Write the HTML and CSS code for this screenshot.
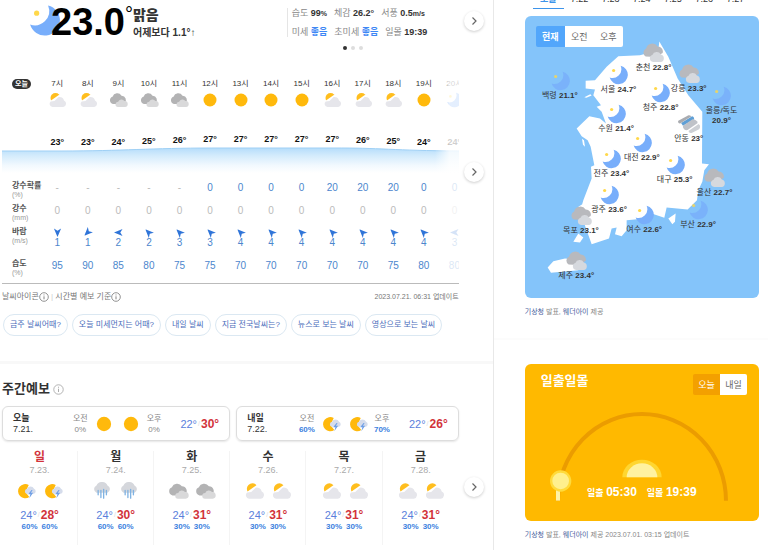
FILE: index.html
```html
<!DOCTYPE html>
<html lang="ko">
<head>
  <meta charset="UTF-8" />
  <meta name="viewport" content="width=device-width, initial-scale=1.0" />
  <title>날씨</title>
  <link rel="stylesheet" href="styles.css">
</head>
<body>
  <svg class="sprite" aria-hidden="true">
    <symbol id="sun" viewBox="0 0 20 16"><circle cx="10" cy="8" r="6.500" fill="#ffb90c"/></symbol>
    <symbol id="partly" viewBox="0 0 20 16">
      <circle cx="8.500" cy="6" r="5" fill="#ffbe1e"/>
      <path d="M2.500 9.500L12.500 2.500L20 8V16H2z" fill="#fff"/>
      <path d="M5.500 15a3.200 3.200 0 0 1-1.800-5.600L7.500 9l4-4a4.600 4.600 0 0 1 5.500 3.500a3.400 3.400 0 0 1-.8 6.500z" fill="#e6e6eb"/>
    </symbol>
    <symbol id="cloudy" viewBox="0 0 20 16">
      <path d="M5 12a3.800 3.800 0 0 1-.5-7.300a5 5 0 0 1 9-1a4.300 4.300 0 0 1 3 7.500L12 12z" fill="#b3b3b4"/>
      <path d="M10 15a2.600 2.600 0 0 1 .2-5.200a3.500 3.500 0 0 1 6.200-.8a3 3 0 0 1 .6 6z" fill="#d9d9da"/>
    </symbol>
    <symbol id="shower" viewBox="0 0 20 16">
      <path d="M12.500 2.500A6.500 6.500 0 1 0 13 13.500L9.500 9z" fill="#ffb90c"/>
      <path d="M10.500 10.500a2.400 2.400 0 0 1 .5-4.600a3.500 3.500 0 0 1 6.300 0a2.500 2.500 0 0 1 0 4.600z" fill="#d5dceb"/>
      <path d="M15 7l-3 4h2l-1 3.500 3.500-5h-2l1.500-2.500z" fill="#6f9fe6"/>
    </symbol>
    <symbol id="rain" viewBox="0 0 20 16">
      <path d="M5 9.500a3.500 3.500 0 0 1 0-6.500a5.500 5.500 0 0 1 10 0a3.500 3.500 0 0 1 0 6.500z" fill="#d5d7dc"/>
      <path d="M6.500 7.500v4M9 7.500v6.500M11.500 6.500v8M14 7.500v4" stroke="#7fb2e2" stroke-width="1.200" stroke-linecap="round"/>
    </symbol>
    <symbol id="moon" viewBox="0 0 22 20">
      <path d="M13.500 .8A9.300 9.300 0 1 1 2.500 12.500A9 9 0 0 0 11.500 10.500A9 9 0 0 0 13.500 .8z" fill="#78aefb"/>
      <circle cx="6.500" cy="5.500" r="1.600" fill="#ffd84a"/>
    </symbol>
    <symbol id="cloud-big" viewBox="0 0 22 20">
      <path d="M3.500 13.500a4.500 4.500 0 0 1 .5-8a6.300 6.300 0 0 1 11.500-2a5 5 0 0 1 5 6.500l-7 4z" fill="#b8b9bd"/>
      <path d="M11 19a3.600 3.600 0 0 1-.8-7a4.700 4.700 0 0 1 8.500-.5a3.900 3.900 0 0 1 .3 7.500z" fill="#d6d9de"/>
    </symbol>
    <symbol id="haze" viewBox="0 0 26 20">
      <path d="M5 9L17 1.500a3 3 0 0 1 2 3.500L7 12z" fill="#5e9fd6"/>
      <path d="M2 6.500L13 .5a3 3 0 0 1 3 1.500L4 9.500a2 2 0 0 1-2-3z" fill="#a9abb0"/>
      <path d="M7 12l10-7a6 6 0 0 1 6 4l-11 7.500a4 4 0 0 1-5-4.500z" fill="#bfc2c8"/>
      <path d="M13 17.500L24 10a3.500 3.500 0 0 1 0 6L17 19.500a3 3 0 0 1-4-2z" fill="#cdd0d5"/>
    </symbol>
    <symbol id="wind" viewBox="0 0 10 10"><path d="M5 10L1 0.500L5 3L9 0.500z" fill="#2f74d8"/></symbol>
    <symbol id="info" viewBox="0 0 10 10">
      <circle cx="5" cy="5" r="4.300" fill="none" stroke="currentColor" stroke-width=".8"/>
      <path d="M5 4.300v3M5 2.500v.9" stroke="currentColor" stroke-width=".9"/>
    </symbol>
    <symbol id="next" viewBox="0 0 10 10"><path d="M3.500 1.500L7 5L3.500 8.500" fill="none" stroke="#666" stroke-width="1.200"/></symbol>
  </svg>

  <main>
    <section class="now">
      <svg class="now-icon"><use href="#moon"/></svg>
      <strong class="now-temp">23.0<sup>°</sup></strong>
      <div class="now-text">
        <strong>맑음</strong>
        <span>어제보다 1.1°↑</span>
      </div>
      <div class="now-detail">
        <p><span>습도 <b>99<small>%</small></b></span><span>체감 <b>26.2°</b></span><span>서풍 <b>0.5<small>m/s</small></b></span></p>
        <p><span>미세 <b class="good">좋음</b></span><span>초미세 <b class="good">좋음</b></span><span>일몰 <b>19:39</b></span></p>
        <div class="dots"><i class="on"></i><i></i><i></i></div>
      </div>
      <button class="next" aria-label="다음"><svg><use href="#next"/></svg></button>
    </section>

    <section class="hourly">
      <div class="hourly-scroll">
        <table>
          <tr class="time">
            <th><span class="pill">오늘</span></th>
            <td>7시</td><td>8시</td><td>9시</td><td>10시</td><td>11시</td><td>12시</td><td>13시</td><td>14시</td><td>15시</td><td>16시</td><td>17시</td><td>18시</td><td>19시</td><td>20시</td>
          </tr>
          <tr class="sky">
            <th></th>
            <td><svg><use href="#partly"/></svg></td>
            <td><svg><use href="#partly"/></svg></td>
            <td><svg><use href="#cloudy"/></svg></td>
            <td><svg><use href="#cloudy"/></svg></td>
            <td><svg><use href="#cloudy"/></svg></td>
            <td><svg><use href="#sun"/></svg></td>
            <td><svg><use href="#sun"/></svg></td>
            <td><svg><use href="#sun"/></svg></td>
            <td><svg><use href="#sun"/></svg></td>
            <td><svg><use href="#partly"/></svg></td>
            <td><svg><use href="#partly"/></svg></td>
            <td><svg><use href="#partly"/></svg></td>
            <td><svg><use href="#sun"/></svg></td>
            <td><svg><use href="#moon"/></svg></td>
          </tr>
          <tr class="temp">
            <th></th>
            <td>23°</td><td>23°</td><td>24°</td><td class="t25">25°</td><td class="t26">26°</td><td class="t27">27°</td><td class="t27">27°</td><td class="t27">27°</td><td class="t27">27°</td><td class="t27">27°</td><td class="t26">26°</td><td class="t25">25°</td><td>24°</td><td>24°</td>
          </tr>
          <tr class="curve">
            <td colspan="15">
              <svg viewBox="0 0 468 30" preserveAspectRatio="none">
                <defs>
                  <linearGradient id="fade" x1="0" y1="0" x2="0" y2="1">
                    <stop offset="0" stop-color="#b5ddfb"/>
                    <stop offset=".3" stop-color="#d3ebfc"/>
                    <stop offset=".7" stop-color="#f2f9fe"/>
                    <stop offset="1" stop-color="#fff"/>
                  </linearGradient>
                </defs>
                <path d="M0 4H60C120 4 150 1 210 1H340C380 1 400 4 468 4V26H0z" fill="url(#fade)"/>
                <path d="M0 4H60C120 4 150 1 210 1H340C380 1 400 4 468 4" fill="none" stroke="#9fd0f5"/>
              </svg>
            </td>
          </tr>
          <tr class="blue">
            <th>강수확률<small>(%)</small></th>
            <td class="none">-</td><td class="none">-</td><td class="none">-</td><td class="none">-</td><td class="none">-</td><td>0</td><td>0</td><td>0</td><td>0</td><td>20</td><td>20</td><td>20</td><td>0</td><td>0</td>
          </tr>
          <tr class="gray">
            <th>강수<small>(mm)</small></th>
            <td>0</td><td>0</td><td>0</td><td>0</td><td>0</td><td>0</td><td>0</td><td>0</td><td>0</td><td>0</td><td>0</td><td>0</td><td>0</td><td>0</td>
          </tr>
          <tr class="blue wind">
            <th>바람<small>(m/s)</small></th>
            <td><svg><use href="#wind"/></svg>1</td>
            <td><svg class="sw"><use href="#wind"/></svg>1</td>
            <td><svg class="w"><use href="#wind"/></svg>2</td>
            <td><svg class="nw"><use href="#wind"/></svg>2</td>
            <td><svg class="nw"><use href="#wind"/></svg>3</td>
            <td><svg class="nw"><use href="#wind"/></svg>3</td>
            <td><svg class="nw"><use href="#wind"/></svg>4</td>
            <td><svg class="nw"><use href="#wind"/></svg>4</td>
            <td><svg class="nw"><use href="#wind"/></svg>4</td>
            <td><svg class="nw"><use href="#wind"/></svg>4</td>
            <td><svg class="nw"><use href="#wind"/></svg>4</td>
            <td><svg class="nw"><use href="#wind"/></svg>4</td>
            <td><svg class="nw"><use href="#wind"/></svg>4</td>
            <td><svg class="w"><use href="#wind"/></svg>3</td>
          </tr>
          <tr class="blue">
            <th>습도<small>(%)</small></th>
            <td>95</td><td>90</td><td>85</td><td>80</td><td>75</td><td>75</td><td>70</td><td>70</td><td>70</td><td>70</td><td>70</td><td>75</td><td>80</td><td>80</td>
          </tr>
        </table>
      </div>
      <button class="next" aria-label="다음 시간"><svg><use href="#next"/></svg></button>
    </section>

    <div class="notes">
      <span>날씨아이콘<svg><use href="#info"/></svg> <i>|</i> 시간별 예보 기준<svg><use href="#info"/></svg></span>
      <time>2023.07.21. 06:31 업데이트</time>
    </div>

    <nav class="chips">
      <a href="#">금주 날씨어때?</a>
      <a href="#">오늘 미세먼지는 어때?</a>
      <a href="#">내일 날씨</a>
      <a href="#">지금 전국날씨는?</a>
      <a href="#">뉴스로 보는 날씨</a>
      <a href="#">영상으로 보는 날씨</a>
    </nav>

    <section class="weekly">
      <h2>주간예보 <svg><use href="#info"/></svg></h2>
      <div class="cards">
        <div class="card">
          <div class="day"><strong>오늘</strong><span>7.21.</span></div>
          <div class="half">오전<span>0%</span></div>
          <svg><use href="#sun"/></svg>
          <svg><use href="#sun"/></svg>
          <div class="half">오후<span>0%</span></div>
          <div class="range"><span>22°</span><i>/</i><b>30°</b></div>
        </div>
        <div class="card">
          <div class="day"><strong>내일</strong><span>7.22.</span></div>
          <div class="half">오전<b>60%</b></div>
          <svg><use href="#shower"/></svg>
          <svg><use href="#shower"/></svg>
          <div class="half">오후<b>70%</b></div>
          <div class="range"><span>22°</span><i>/</i><b>26°</b></div>
        </div>
      </div>
      <ul class="week">
        <li>
          <strong class="sunday">일</strong><span class="date">7.23.</span>
          <div class="icons"><svg><use href="#shower"/></svg><svg><use href="#shower"/></svg></div>
          <div class="range"><span>24°</span><i>/</i><b>28°</b></div>
          <div class="chance"><span>60%</span><span>60%</span></div>
        </li>
        <li>
          <strong>월</strong><span class="date">7.24.</span>
          <div class="icons"><svg><use href="#rain"/></svg><svg><use href="#rain"/></svg></div>
          <div class="range"><span>24°</span><i>/</i><b>30°</b></div>
          <div class="chance"><span>60%</span><span>60%</span></div>
        </li>
        <li>
          <strong>화</strong><span class="date">7.25.</span>
          <div class="icons"><svg><use href="#cloudy"/></svg><svg><use href="#cloudy"/></svg></div>
          <div class="range"><span>24°</span><i>/</i><b>31°</b></div>
          <div class="chance"><span>30%</span><span>30%</span></div>
        </li>
        <li>
          <strong>수</strong><span class="date">7.26.</span>
          <div class="icons"><svg><use href="#partly"/></svg><svg><use href="#partly"/></svg></div>
          <div class="range"><span>24°</span><i>/</i><b>31°</b></div>
          <div class="chance"><span>30%</span><span>30%</span></div>
        </li>
        <li>
          <strong>목</strong><span class="date">7.27.</span>
          <div class="icons"><svg><use href="#partly"/></svg><svg><use href="#partly"/></svg></div>
          <div class="range"><span>24°</span><i>/</i><b>31°</b></div>
          <div class="chance"><span>30%</span><span>30%</span></div>
        </li>
        <li>
          <strong>금</strong><span class="date">7.28.</span>
          <div class="icons"><svg><use href="#partly"/></svg><svg><use href="#partly"/></svg></div>
          <div class="range"><span>24°</span><i>/</i><b>31°</b></div>
          <div class="chance"><span>30%</span><span>30%</span></div>
        </li>
      </ul>
      <button class="next" aria-label="다음 날"><svg><use href="#next"/></svg></button>
    </section>
  </main>

  <aside>
    <section class="nation">
      <nav class="dates">
        <a href="#" class="on">오늘</a><a href="#">7.22</a><a href="#">7.23</a><a href="#">7.24</a><a href="#">7.25</a><a href="#">7.26</a><a href="#">7.27</a>
      </nav>
      <div class="map">
        <svg class="land" viewBox="40 48 703 846" fill="#fff" aria-hidden="true">
          <path d="M443 124L470 170L498 235L530 285L572 335L571 490L592 492L578 510L572 545L560 570L556 600L528 628L465 622L458 653L420 640L400 655L345 660V690L330 708L310 702L315 682L300 685L292 715L240 732L225 690L205 635L215 600L240 535L238 500L248 495L237 440L228 420L210 408L195 385L233 348L265 355L283 370L270 335L255 320L268 315L245 285L250 268L222 265V242L250 240L285 200L320 168L385 165L440 150z"/>
          <path d="M218 291L236 282L240 286L224 293zM211 416L217 420L220 440L214 434zM185 725L200 700L215 712L205 727zM470 655L492 640L490 665L482 672zM108 802L125 783L160 775L205 780L200 810L118 818zM200 620L212 612L210 626z"/>
        </svg>
        <div class="seg">
          <button class="on">현재</button><button>오전</button><button>오후</button>
        </div>
        <div class="pin baengnyeong"><svg><use href="#moon"/></svg><span>백령 <b>21.1°</b></span></div>
        <div class="pin seoul"><svg><use href="#moon"/></svg><span>서울 <b>24.7°</b></span></div>
        <div class="pin chuncheon"><svg><use href="#cloud-big"/></svg><span>춘천 <b>22.8°</b></span></div>
        <div class="pin gangneung"><svg><use href="#cloud-big"/></svg><span>강릉 <b>23.3°</b></span></div>
        <div class="pin cheongju"><svg><use href="#moon"/></svg><span>청주 <b>22.8°</b></span></div>
        <div class="pin ulleung"><svg><use href="#moon"/></svg><span>울릉/독도<br><b>20.9°</b></span></div>
        <div class="pin suwon"><svg><use href="#moon"/></svg><span>수원 <b>21.4°</b></span></div>
        <div class="pin andong"><svg><use href="#haze"/></svg><span>안동 <b>23°</b></span></div>
        <div class="pin daejeon"><svg><use href="#moon"/></svg><span>대전 <b>22.9°</b></span></div>
        <div class="pin jeonju"><svg><use href="#moon"/></svg><span>전주 <b>23.4°</b></span></div>
        <div class="pin daegu"><svg><use href="#moon"/></svg><span>대구 <b>25.3°</b></span></div>
        <div class="pin ulsan"><svg><use href="#cloud-big"/></svg><span>울산 <b>22.7°</b></span></div>
        <div class="pin gwangju"><svg><use href="#moon"/></svg><span>광주 <b>23.6°</b></span></div>
        <div class="pin busan"><svg><use href="#moon"/></svg><span>부산 <b>22.9°</b></span></div>
        <div class="pin mokpo"><svg><use href="#cloud-big"/></svg><span>목포 <b>23.1°</b></span></div>
        <div class="pin yeosu"><svg><use href="#moon"/></svg><span>여수 <b>22.6°</b></span></div>
        <div class="pin jeju"><svg><use href="#cloud-big"/></svg><span>제주 <b>23.4°</b></span></div>
      </div>
      <p class="source"><a href="#">기상청</a> 발표, <a href="#">웨더아이</a> 제공</p>
    </section>

    <section class="sunrise">
      <div class="sun-card">
        <svg class="arc" viewBox="40 42 703 470" aria-hidden="true">
          <path d="M139 452A252 260 0 0 1 643 452" fill="none" stroke="#eb9c00" stroke-width="12"/>
          <path d="M139 420V452" stroke="#fff3a8" stroke-width="12"/>
          <circle cx="147" cy="393" r="32" fill="#ffdb3c"/>
          <circle cx="147" cy="393" r="25" fill="#fff08e"/>
          <path d="M332 382A58 52 0 0 1 450 382z" fill="#ffd630"/>
          <path d="M345 382A46 42 0 0 1 437 382z" fill="#fff2a0"/>
        </svg>
        <header>
          <h2>일출일몰</h2>
          <div class="seg">
            <button class="on">오늘</button><button>내일</button>
          </div>
        </header>
        <p class="sun-times"><span>일출 <b>05:30</b></span><span>일몰 <b>19:39</b></span></p>
      </div>
      <p class="source"><a href="#">기상청</a> 발표, <a href="#">웨더아이</a> 제공 2023.07.01. 03:15 업데이트</p>
    </section>
  </aside>
</body>
</html>
```
FILE: styles.css
```css
* {
  box-sizing: border-box;
}
body {
  margin: 0;
  display: grid;
  grid-template-columns: 9fr 5fr;
  min-height: 100vh;
  overflow: hidden;
  background: #fff;
  color: #333;
  font-family: "Liberation Sans", "Noto Sans CJK KR", sans-serif;
  font-size: 9px;
  line-height: 12px;
}
h2, p, ul {
  margin: 0;
  padding: 0;
}
i {
  font-style: normal;
}
a {
  color: inherit;
  text-decoration: none;
}
button {
  font-family: inherit;
  border: none;
  padding: 0;
  cursor: pointer;
}
.sprite {
  position: absolute;
  width: 0;
  height: 0;
}
main {
  border-right: 1px solid #e8e8e8;
}

/* current weather */
.now {
  position: relative;
  display: flex;
  align-items: flex-start;
  height: 77px;
  padding: 4px 34px 0 26px;
}
.now-icon {
  width: 36px;
  height: 33px;
  margin-right: -11px;
}
.now-temp {
  font-size: 38px;
  line-height: 37px;
  color: #000;
  position: relative;
}
.now-temp sup {
  font-size: 20px;
  line-height: 20px;
  font-weight: normal;
  vertical-align: top;
}
.now-text {
  display: flex;
  flex-direction: column;
  font-size: 10px;
  line-height: 18px;
  font-weight: bold;
  padding-top: 2px;
}
.now-text strong {
  font-size: 14px;
}
.now-detail {
  margin: 4px 0 0 auto;
  width: 172px;
  color: #888;
}
.now-detail p {
  display: flex;
  gap: 7px;
  padding-left: 4px;
  line-height: 10px;
  padding-bottom: 8px;
  border-left: 1px solid #e5e5e5;
}
.now-detail p + p {
  padding-bottom: 0;
}
.now-detail b {
  color: #333;
}
.now-detail small {
  font-size: 7px;
}
.now-detail .good {
  color: #3d87f5;
}
.dots {
  display: flex;
  gap: 4px;
  padding: 9px 0 0 56px;
}
.dots i {
  width: 4px;
  height: 4px;
  border-radius: 50%;
  background: #ddd;
}
.dots .on {
  background: #333;
}
.next {
  position: absolute;
  right: 9px;
  width: 20px;
  height: 20px;
  border-radius: 50%;
  background: #fff;
  box-shadow: 0 1px 3px rgba(0,0,0,0.2);
  display: flex;
  align-items: center;
  justify-content: center;
}
.now .next {
  top: 11px;
}

/* hourly table */
.hourly {
  position: relative;
  margin: 0 34px 0 2px;
  border-bottom: 1px solid #bbb;
}
.hourly .next {
  top: 85px;
  right: -25px;
}
.hourly-scroll {
  position: relative;
  overflow: hidden;
}
.hourly-scroll::after {
  content: "";
  position: absolute;
  top: 0;
  right: 0;
  bottom: 0;
  width: 24px;
  background: linear-gradient(to right, rgba(255,255,255,0), rgba(255,255,255,0.8) 60%);
}
.hourly table {
  width: calc(100% + 11px);
  table-layout: fixed;
  border-collapse: collapse;
  text-align: center;
}
.hourly th, .hourly td {
  padding: 0;
  vertical-align: top;
}
.hourly th {
  width: 40px;
  padding-left: 10px;
  text-align: left;
  font-size: 8px;
  line-height: 10px;
  color: #555;
  white-space: nowrap;
}
.hourly th small {
  display: block;
  font-size: 7px;
  line-height: 8px;
  font-weight: normal;
  color: #999;
}
.hourly svg {
  display: block;
  margin: 0 auto;
  width: 20px;
  height: 16px;
}
.hourly .pill {
  display: block;
  width: 19px;
  border-radius: 6px;
  background: #333;
  color: #fff;
  font-size: 7px;
  text-align: center;
  margin-top: 2px;
}
.hourly .time td {
  height: 15px;
  line-height: 13px;
  font-size: 8px;
}
.hourly .sky td {
  height: 19px;
}
.hourly .temp td {
  height: 36px;
  vertical-align: bottom;
  font-size: 9px;
  line-height: 10px;
  font-weight: bold;
  color: #111;
}
.hourly .temp .t25 {
  padding-bottom: 1px;
}
.hourly .temp .t26 {
  padding-bottom: 2px;
}
.hourly .temp .t27 {
  padding-bottom: 3px;
}
.hourly .curve svg {
  width: 100%;
  height: 30px;
}
.hourly .blue td, .hourly .gray td {
  height: 23px;
  padding-top: 5px;
  font-size: 10px;
  line-height: 12px;
  color: #4c86cd;
}
.hourly .blue th, .hourly .gray th {
  padding-top: 4px;
}
.hourly .gray td, .hourly .blue .none {
  color: #bbb;
}
.hourly .wind td {
  height: 32px;
}
.hourly .wind svg {
  width: 9px;
  height: 9px;
}
.hourly .sw {
  transform: rotate(45deg);
}
.hourly .w {
  transform: rotate(90deg);
}
.hourly .nw {
  transform: rotate(135deg);
}
.hourly tr:last-child td {
  height: 28px;
}

.notes {
  display: flex;
  justify-content: space-between;
  align-items: center;
  margin: 7px 34px 0 2px;
  font-size: 8px;
  color: #777;
}
.notes svg {
  width: 10px;
  height: 10px;
  vertical-align: middle;
}
.notes i {
  color: #ccc;
}
.notes time {
  font-size: 7px;
}
.chips {
  display: flex;
  gap: 4px;
  margin-top: 11px;
  padding: 0 0 25px 3px;
  border-bottom: 3px solid #f8f8f8;
}
.chips a {
  padding: 0 6px;
  border: 1px solid #dbe8f2;
  border-radius: 11px;
  font-size: 8px;
  line-height: 20px;
  color: #4a6dbb;
  white-space: nowrap;
}

/* weekly */
.weekly {
  position: relative;
  padding: 16px 34px 0 2px;
}
.weekly h2 {
  display: flex;
  align-items: center;
  gap: 3px;
  font-size: 13px;
  line-height: 18px;
}
.weekly svg {
  width: 22px;
  height: 18px;
}
.weekly h2 svg {
  width: 11px;
  height: 11px;
  color: #aaa;
}
.weekly .next {
  top: 113px;
}
main .next svg {
  width: 10px;
  height: 10px;
  margin: 0;
}
.cards {
  display: grid;
  grid-template-columns: 41fr 40fr;
  gap: 6px;
  margin-top: 8px;
}
.card {
  display: flex;
  align-items: center;
  gap: 5px;
  height: 35px;
  padding: 0 10px;
  border: 1px solid #ddd;
  border-radius: 6px;
  box-shadow: 0 1px 2px rgba(0,0,0,0.1);
}
.card .day {
  margin-right: auto;
  line-height: 11px;
}
.card .day span, .card .day strong {
  display: block;
}
.half {
  font-size: 8px;
  line-height: 11px;
  color: #888;
  text-align: center;
}
.half span, .half b {
  display: block;
}
.half b {
  color: #3b7fe0;
}
.range {
  display: flex;
  justify-content: center;
  align-items: center;
  gap: 1px;
  font-size: 11px;
  line-height: 14px;
  color: #5b7fdc;
}
.card .range {
  margin-left: 14px;
}
.range i {
  font-size: 7px;
  color: #ddd;
}
.range b {
  font-size: 12px;
  color: #d2333b;
}
.week {
  display: grid;
  grid-template-columns: repeat(6, 1fr);
  list-style: none;
  margin-top: 10px;
  text-align: center;
}
.week li {
  height: 94px;
  border-right: 1px solid #f4f4f4;
}
.week li:last-child {
  border-right: none;
}
.week strong, .week .date {
  display: block;
}
.week strong {
  font-size: 12px;
  line-height: 13px;
}
.week .sunday {
  color: #d2333b;
}
.week .date {
  color: #aaa;
}
.icons {
  display: flex;
  justify-content: center;
  gap: 5px;
  padding: 6px 0 8px;
}
.chance {
  display: flex;
  justify-content: center;
  gap: 4px;
  font-size: 8px;
  line-height: 10px;
  font-weight: bold;
  color: #3b7fe0;
}

/* right column */
.nation {
  padding: 0 9px 0 31px;
  height: 349px;
  border-bottom: 2px solid #fcfcfc;
}
.dates {
  display: grid;
  grid-template-columns: repeat(7, 1fr);
  margin: -9px 8px 0;
  text-align: center;
  line-height: 17px;
}
.dates .on {
  color: #3d94ea;
  font-weight: bold;
  border-bottom: 1px solid #3d94ea;
}
.map {
  position: relative;
  aspect-ratio: 234 / 282;
  margin-top: 7px;
  border-radius: 6px;
  background: #84c4fa;
}
.land {
  display: block;
  width: 100%;
  height: 100%;
}
.seg {
  display: flex;
  border-radius: 2px;
  overflow: hidden;
}
.seg button {
  width: 29px;
  height: 21px;
  background: #fff;
  font-size: 9px;
  color: #666;
}
.map .seg {
  position: absolute;
  top: 10px;
  left: 11px;
}
.map .seg .on {
  background: #52a6fb;
  color: #fff;
  font-weight: bold;
}
.pin {
  position: absolute;
  transform: translateX(-50%);
  display: flex;
  flex-direction: column;
  align-items: center;
  font-size: 8px;
  line-height: 10px;
  text-align: center;
  white-space: nowrap;
}
.pin svg {
  width: 24px;
  height: 20px;
}
.baengnyeong { left: 15%; top: 19.5%; }
.seoul { left: 40%; top: 17.4%; }
.chuncheon { left: 55%; top: 9.4%; }
.gangneung { left: 70%; top: 17%; }
.cheongju { left: 58%; top: 23.9%; }
.ulleung { left: 84%; top: 24.8%; }
.suwon { left: 39%; top: 31.2%; }
.andong { left: 70%; top: 34.8%; }
.daejeon { left: 50%; top: 41.3%; }
.jeonju { left: 37%; top: 47.2%; }
.daegu { left: 64%; top: 49.1%; }
.ulsan { left: 81%; top: 53.7%; }
.gwangju { left: 36%; top: 59.8%; }
.busan { left: 74%; top: 65.2%; }
.mokpo { left: 24%; top: 67.2%; }
.yeosu { left: 51%; top: 67%; }
.jeju { left: 22%; top: 83.3%; }
.baengnyeong svg, .ulleung svg, .busan svg {
  opacity: 0.8;
}

.source {
  margin-top: 8px;
  font-size: 7px;
  color: #888;
}
.source a {
  color: #4a62a0;
}

/* sunrise / sunset */
.sunrise {
  padding: 24px 9px 0 31px;
}
.sun-card {
  position: relative;
  border-radius: 6px;
  background: #ffb900;
  color: #fff;
}
.arc {
  display: block;
  width: 100%;
}
.sun-card header {
  position: absolute;
  top: 10px;
  left: 16px;
  right: 12px;
  display: flex;
  justify-content: space-between;
}
.sun-card h2 {
  font-size: 13px;
  line-height: 14px;
}
.sun-card .seg button {
  width: 27px;
}
.sun-card .seg .on {
  background: #f3a000;
  color: #fff;
}
.sun-times {
  position: absolute;
  left: 0;
  right: 0;
  bottom: 21px;
  display: flex;
  justify-content: center;
  gap: 10px;
  font-size: 9px;
  line-height: 14px;
  font-weight: bold;
}
.sun-times b {
  font-size: 12px;
}
```
